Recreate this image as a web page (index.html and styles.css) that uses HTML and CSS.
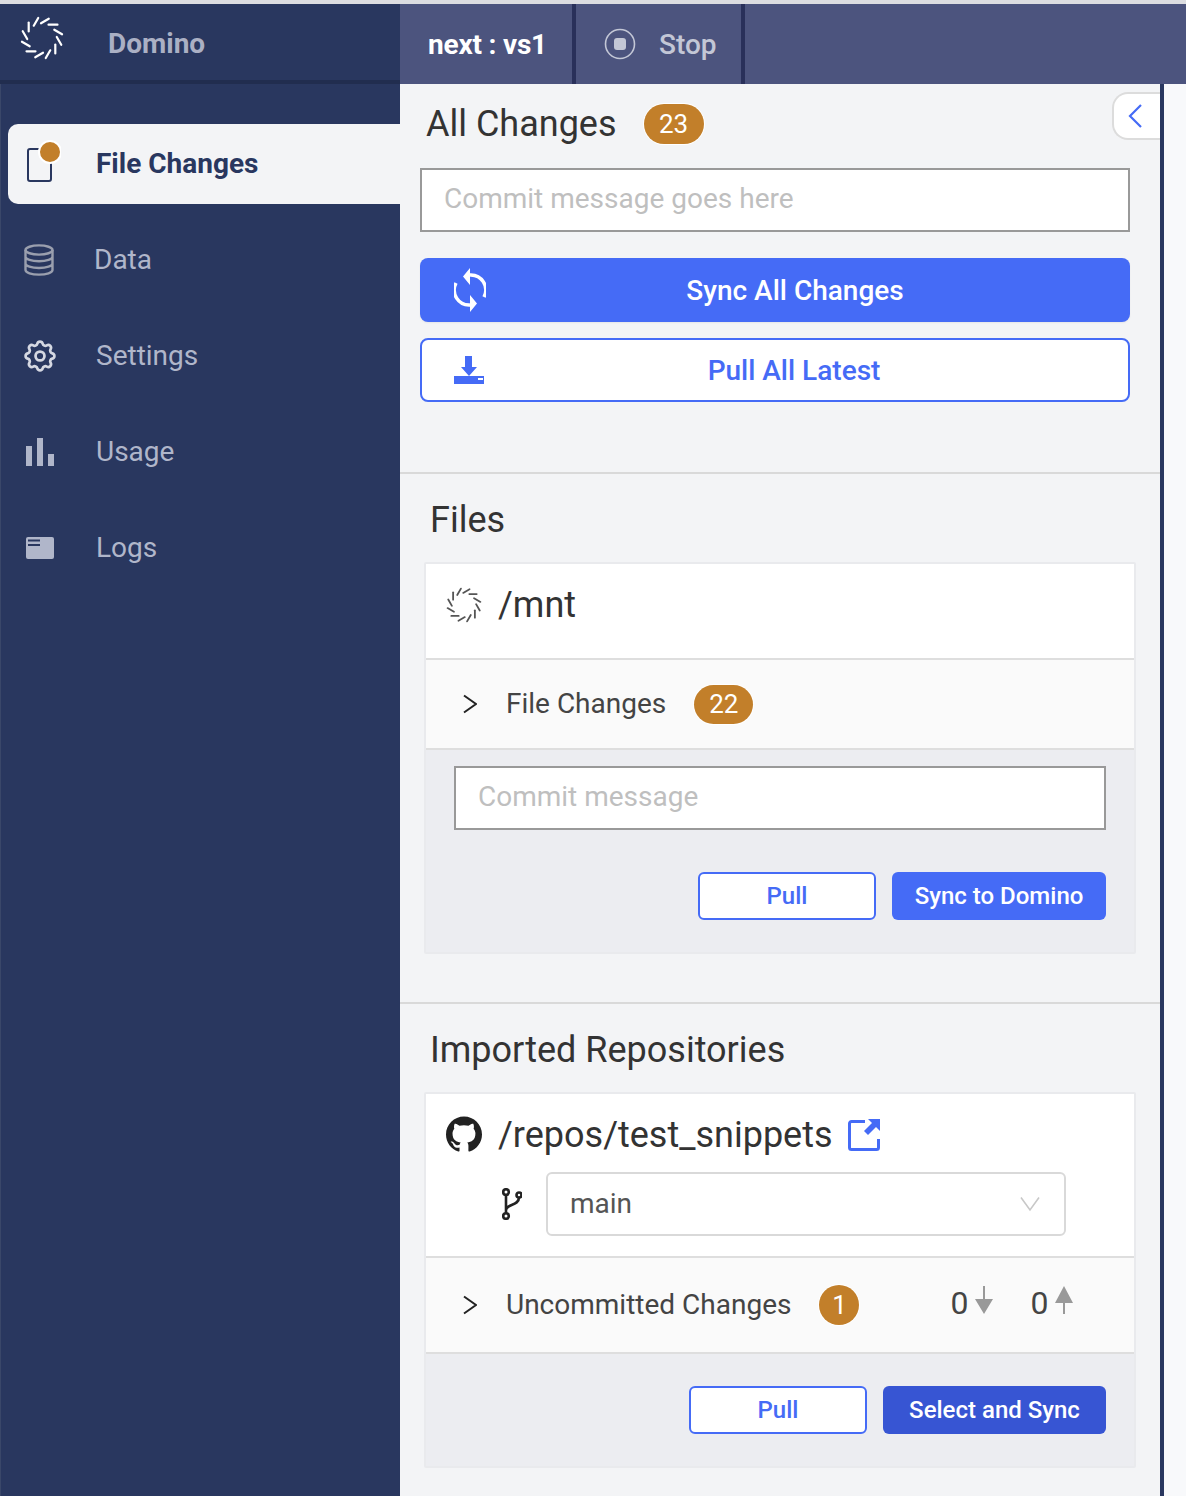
FILE: index.html
```html
<!DOCTYPE html>
<html lang="en">
<head>
<meta charset="utf-8">
<title>Domino</title>
<link rel="stylesheet" href="styles.css">
</head>
<body>
<svg class="defs" width="0" height="0" aria-hidden="true">
  <symbol id="spiral" viewBox="-22 -22 44 44">
    <g fill="none" stroke="currentColor" stroke-width="2.200" stroke-linecap="round">
      <path d="M6.500-13.300H15.500"/><path transform="rotate(30)" d="M6.500-13.300H15.500"/><path transform="rotate(60)" d="M6.500-13.300H15.500"/><path transform="rotate(90)" d="M6.500-13.300H15.500"/><path transform="rotate(120)" d="M6.500-13.300H15.500"/><path transform="rotate(150)" d="M6.500-13.300H15.500"/><path transform="rotate(180)" d="M6.500-13.300H15.500"/><path transform="rotate(210)" d="M6.500-13.300H15.500"/><path transform="rotate(240)" d="M6.500-13.300H15.500"/><path transform="rotate(270)" d="M6.500-13.300H15.500"/><path transform="rotate(300)" d="M6.500-13.300H15.500"/><path transform="rotate(330)" d="M6.500-13.300H15.500"/>
    </g>
  </symbol>
  <symbol id="chev" viewBox="0 0 14 20"><path d="M1 1.500 13 10 1 18.500" fill="none" stroke="#222" stroke-width="2"/></symbol>
</svg>
<div class="app">
  <header class="topbar">
    <div class="brand">
      <svg class="brand-logo"><use href="#spiral"/></svg>
      <span class="brand-name">Domino</span>
    </div>
    <div class="tabs">
      <div class="tab tab-name">next : vs1</div>
      <div class="tab tab-stop">
        <svg class="stop-icon" viewBox="0 0 32 32"><circle cx="16" cy="16" r="14.500" fill="none" stroke="#c3c7d6" stroke-width="1.600"/><rect x="10" y="10" width="12" height="12" rx="3" fill="#c3c7d6"/></svg>
        <span>Stop</span>
      </div>
    </div>
  </header>
  <div class="layout">
    <nav class="sidebar">
      <a class="nav-item active">
        <svg class="nav-icon file-icon" viewBox="0 0 34 44"><rect x="1" y="9" width="23" height="32" rx="2" fill="none" stroke="#29375f" stroke-width="2"/><circle cx="23" cy="12" r="11" fill="#c27f2a" stroke="#fff" stroke-width="2"/></svg>
        <span class="nav-label">File Changes</span>
      </a>
      <a class="nav-item item-data">
        <svg class="nav-icon" viewBox="0 0 32 32"><g fill="none" stroke="#9a9fae" stroke-width="2.400"><ellipse cx="16" cy="6" rx="13.500" ry="4.600"/><path d="M2.500 6v20c0 2.600 6 4.600 13.500 4.600s13.500-2 13.500-4.600V6M2.500 12.700c0 2.600 6 4.600 13.500 4.600s13.500-2 13.500-4.600M2.500 19.400c0 2.600 6 4.600 13.500 4.600s13.500-2 13.500-4.600"/></g></svg>
        <span class="nav-label">Data</span>
      </a>
      <a class="nav-item">
        <svg class="nav-icon" viewBox="2 2 20 20"><g fill="none" stroke="#d5d8e2" stroke-width="1.700"><path d="M10.325 4.317c.426-1.756 2.924-1.756 3.350 0a1.724 1.724 0 002.573 1.066c1.543-.940 3.310.826 2.370 2.370a1.724 1.724 0 001.065 2.572c1.756.426 1.756 2.924 0 3.350a1.724 1.724 0 00-1.066 2.573c.940 1.543-.826 3.310-2.370 2.370a1.724 1.724 0 00-2.572 1.065c-.426 1.756-2.924 1.756-3.350 0a1.724 1.724 0 00-2.573-1.066c-1.543.940-3.310-.826-2.370-2.370a1.724 1.724 0 00-1.065-2.572c-1.756-.426-1.756-2.924 0-3.350a1.724 1.724 0 001.066-2.573c-.940-1.543.826-3.310 2.370-2.370.996.608 2.296.070 2.572-1.065z"/><circle cx="12" cy="12" r="2.800"/></g></svg>
        <span class="nav-label">Settings</span>
      </a>
      <a class="nav-item">
        <svg class="nav-icon" viewBox="0 0 32 32"><g fill="#b0b6ca"><rect x="2" y="10" width="6" height="20"/><rect x="13" y="2" width="6" height="28"/><rect x="24" y="18" width="6" height="12"/></g></svg>
        <span class="nav-label">Usage</span>
      </a>
      <a class="nav-item">
        <svg class="nav-icon" viewBox="0 0 32 32"><rect x="2" y="5" width="28" height="22" rx="2" fill="#b0b6ca"/><path d="M4 8.500h12M4 13h12" stroke="#29375f" stroke-width="2"/></svg>
        <span class="nav-label">Logs</span>
      </a>
    </nav>
    <main class="panel">
      <section class="section section-all">
        <button class="collapse-tab" aria-label="Collapse"><svg viewBox="0 0 16 26" class="collapse-icon"><path d="M14 2 3 13l11 11" fill="none" stroke="#456bf6" stroke-width="2.200"/></svg></button>
        <div class="title-row">
          <h1 class="title">All Changes</h1>
          <span class="badge badge-big">23</span>
        </div>
        <div class="input input-all">Commit message goes here</div>
        <button class="wide-btn primary">
          <svg class="wide-icon" viewBox="0 0 32 44"><g fill="none" stroke="#fff" stroke-width="3.500"><path d="M16 7A15 15 0 0 1 30 29"/><path d="M16 37A15 15 0 0 1 2 15"/></g><path d="M16 0v17L9 8.500zM16 44V27l7 8.500z" fill="#fff"/></svg>
          <span>Sync All Changes</span>
        </button>
        <button class="wide-btn outline">
          <svg class="wide-icon" viewBox="0 0 32 32"><path d="M12 1h7v11h5l-8 9-8-9h4z" fill="#456bf6"/><path fill-rule="evenodd" d="M1 21h30v8H1zM25 23v2h5v-2z" fill="#456bf6"/></svg>
          <span>Pull All Latest</span>
        </button>
      </section>

      <section class="section section-files">
        <h2 class="title sub-title">Files</h2>
        <div class="card">
          <div class="card-head head-mnt">
            <svg class="head-icon spiral-dark"><use href="#spiral"/></svg>
            <span class="head-name">/mnt</span>
          </div>
          <div class="row row-files">
            <svg class="chev"><use href="#chev"/></svg>
            <span class="row-label">File Changes</span>
            <span class="badge badge-small">22</span>
          </div>
          <div class="card-foot">
            <div class="input input-commit">Commit message</div>
            <div class="actions actions-files">
              <button class="btn btn-outline">Pull</button>
              <button class="btn btn-primary btn-sync">Sync to Domino</button>
            </div>
          </div>
        </div>
      </section>

      <section class="section section-repos">
        <h2 class="title sub-title">Imported Repositories</h2>
        <div class="card">
          <div class="card-head head-repo">
            <div class="repo-line">
              <svg class="head-icon" viewBox="0 0 24 24"><path fill="#222" d="M12 .297c-6.630 0-12 5.373-12 12 0 5.303 3.438 9.800 8.205 11.385.600.113.820-.258.820-.577 0-.285-.010-1.040-.015-2.040-3.338.724-4.042-1.610-4.042-1.610C4.422 18.070 3.633 17.700 3.633 17.700c-1.087-.744.084-.729.084-.729 1.205.084 1.838 1.236 1.838 1.236 1.070 1.835 2.809 1.305 3.495.998.108-.776.417-1.305.760-1.605-2.665-.300-5.466-1.332-5.466-5.930 0-1.310.465-2.380 1.235-3.220-.135-.303-.540-1.523.105-3.176 0 0 1.005-.322 3.300 1.230.960-.267 1.980-.399 3-.405 1.020.006 2.040.138 3 .405 2.280-1.552 3.285-1.230 3.285-1.230.645 1.653.240 2.873.120 3.176.765.840 1.230 1.910 1.230 3.220 0 4.610-2.805 5.625-5.475 5.920.420.360.810 1.096.810 2.220 0 1.606-.015 2.896-.015 3.286 0 .315.210.690.825.570C20.565 22.092 24 17.592 24 12.297c0-6.627-5.373-12-12-12"/></svg>
              <span class="head-name repo-name">/repos/test_snippets</span>
              <svg class="ext-icon" viewBox="0 0 32 32"><path d="M17 2.500H3.500a2 2 0 0 0-2 2v24a2 2 0 0 0 2 2h25a2 2 0 0 0 2-2V20" fill="none" stroke="#456bf6" stroke-width="3"/><path d="M20 0h12v12l-4-4-8 8-4-4 8-8z" fill="#456bf6"/></svg>
            </div>
            <div class="branch-line">
              <svg class="branch-icon" viewBox="0 0 20 32"><g fill="none" stroke="#222" stroke-width="2.600"><circle cx="4" cy="4" r="2.800"/><circle cx="4" cy="28" r="2.800"/><circle cx="17" cy="7" r="2.500"/><path d="M4 7v18M4 22c0-6 13-4 13-12.500"/></g></svg>
              <div class="select"><span class="select-text">main</span><svg class="select-caret" viewBox="0 0 20 16"><path d="M1 1.500 10 14l9-12.500" fill="none" stroke="#c8c8c8" stroke-width="1.600"/></svg></div>
            </div>
          </div>
          <div class="row row-repo">
            <svg class="chev"><use href="#chev"/></svg>
            <span class="row-label">Uncommitted Changes</span>
            <span class="badge badge-round">1</span>
            <span class="count count-first">0</span>
            <svg class="count-arrow" viewBox="0 0 18 28"><path d="M8 0h2v13h8l-9 15-9-15h8z" fill="#999"/></svg>
            <span class="count count-second">0</span>
            <svg class="count-arrow" viewBox="0 0 18 28"><path d="M8 28h2V17h8L9 0 0 17h8z" fill="#999"/></svg>
          </div>
          <div class="card-foot foot-repo">
            <div class="actions">
              <button class="btn btn-outline">Pull</button>
              <button class="btn btn-dark">Select and Sync</button>
            </div>
          </div>
        </div>
      </section>
    </main>
    <div class="gutter"></div>
  </div>
</div>
</body>
</html>
```
FILE: styles.css
```css
* { box-sizing: border-box; }
html, body { margin: 0; padding: 0; }
body { width: 1186px; height: 1496px; overflow: hidden; background: #f8f9fb; font-family: Roboto, "Liberation Sans", sans-serif; color: #333; }
.defs { display: block; width: 0; height: 0; }

.app { display: flex; flex-direction: column; height: 1496px; border-top: 4px solid #dcdde1; }
.topbar { display: flex; height: 80px; flex: none; }
.brand { width: 400px; display: flex; align-items: center; background: #29375f; border-bottom: 4px solid #212d4f; padding-left: 20px; }
.brand-logo { width: 44px; height: 44px; margin-bottom: 8px; color: #fff; }
.brand-name { margin: 4px 0 0 44px; font-size: 28px; font-weight: 700; color: #abb0c4; line-height: 1; }
.tabs { flex: 1; display: flex; background: #4c547e; }
.tab { display: flex; align-items: center; height: 80px; border-right: 4px solid #29305a; font-size: 28px; }
.tab-name { width: 176px; padding-left: 28px; font-weight: 700; color: #fff; letter-spacing: -.2px; }
.tab-stop { width: 169px; padding-left: 28px; font-weight: 500; color: #c3c7d6; }
.stop-icon { width: 32px; height: 32px; margin-right: 23px; }

.layout { flex: 1; display: flex; min-height: 0; }
.sidebar { width: 400px; flex: none; background: #29375f; padding: 40px 0 0 8px; display: flex; flex-direction: column; gap: 16px; border-left: 1px solid #3a4769; }
.nav-item { height: 80px; display: flex; align-items: center; padding-left: 15px; font-size: 28px; color: #b0b6ca; border-radius: 10px 0 0 10px; }
.nav-label { margin-top: -2px; }
.nav-item.active { background: #f3f4f6; color: #29375f; font-weight: 700; margin-left: -1px; padding-left: 19px; }
.item-data { padding-left: 14px; }
.item-data .nav-icon { margin-right: 39px; }
.nav-icon { width: 32px; height: 32px; flex: none; margin-right: 40px; }
.file-icon { width: 34px; height: 44px; margin-right: 35px; margin-top: -4px; }

.panel { width: 764px; flex: none; background: #f3f4f6; border-right: 4px solid #29375f; min-height: 0; }
.gutter { flex: 1; background: #f8f9fb; }
.section { position: relative; border-bottom: 2px solid #d9d9d9; }
.section-all { padding: 20px 30px 70px 20px; }
.section-files { padding: 26px 24px 48px 24px; }
.section-repos { padding: 26px 24px 0; border-bottom: 0; }

.collapse-tab { position: absolute; top: 8px; right: 0; width: 48px; height: 48px; padding: 0; background: #fff; border: 2px solid #dcdcdc; border-right: 0; border-radius: 16px 0 0 16px; display: flex; align-items: center; justify-content: center; }
.collapse-icon { width: 16px; height: 26px; margin-left: -4px; }

.title { margin: 0; font-size: 36px; line-height: 40px; font-weight: 400; color: #333; }
.title-row { display: flex; align-items: center; padding-left: 6px; height: 40px; }
.sub-title { padding-left: 6px; margin-bottom: 22px; }
.badge { display: inline-flex; align-items: center; justify-content: center; background: #c27f2a; color: #fff; flex: none; box-shadow: 0 0 0 1px #fff; }
.badge-big { width: 60px; height: 40px; border-radius: 20px; font-size: 26px; margin-left: 27px; }
.badge-small { width: 59px; height: 39px; border-radius: 20px; font-size: 26px; margin-left: 28px; }
.badge-round { width: 40px; height: 40px; border-radius: 50%; font-size: 26px; margin-left: 28px; }

.input { display: flex; align-items: center; height: 64px; background: #fff; border: 2px solid #999; padding: 0 0 4px 22px; font-size: 28px; color: #bfbfbf; }
.input-all { margin: 24px 0 26px; }

.wide-btn { position: relative; display: flex; align-items: center; justify-content: center; width: 100%; height: 64px; padding: 0 0 0 40px; border-radius: 8px; font: 500 28px Roboto, "Liberation Sans", sans-serif; }
.wide-btn.primary { background: #456bf6; border: 0; color: #fff; margin-bottom: 16px; box-shadow: 0 1px 2px rgba(0,0,0,.06); }
.wide-btn.outline { background: #fff; border: 2px solid #456bf6; color: #456bf6; padding-left: 38px; }
.wide-icon { position: absolute; left: 34px; top: 10px; width: 32px; height: 44px; }
.wide-btn.outline .wide-icon { left: 31px; top: 15px; width: 32px; height: 32px; }

.card { background: #fff; border: 2px solid #e9eaed; border-radius: 2px; }
.card-head { border-bottom: 2px solid #dedede; }
.head-mnt { display: flex; align-items: flex-start; height: 96px; padding: 21px 0 0 20px; }
.head-icon { width: 36px; height: 36px; flex: none; margin-top: 2px; }
.spiral-dark { color: #555; }
.head-name { margin-left: 16px; font-size: 36px; line-height: 40px; color: #333; }
.repo-name { margin-top: 1px; }
.head-repo { padding: 20px 0 20px 20px; }
.repo-line { display: flex; align-items: flex-start; height: 58px; }
.ext-icon { width: 32px; height: 32px; margin: 5px 0 0 15px; }
.branch-line { display: flex; align-items: center; }
.branch-icon { width: 20px; height: 32px; margin-left: 56px; }
.select { display: flex; align-items: center; justify-content: space-between; width: 520px; height: 64px; margin-left: 24px; padding: 0 24px 0 22px; border: 2px solid #d9d9d9; border-radius: 6px; font-size: 28px; color: #555; }
.select-text { margin-top: -2px; }
.select-caret { width: 20px; height: 16px; }

.row { display: flex; align-items: center; background: #fafafa; border-bottom: 2px solid #dedede; padding-left: 37px; }
.row-files { height: 90px; }
.row-repo { height: 96px; }
.chev { width: 14px; height: 20px; flex: none; }
.row-label { margin: -2px 0 0 29px; font-size: 28px; color: #444; }
.count { font-size: 32px; color: #444; line-height: 1; margin-top: -4px; }
.count-first { margin-left: 91px; }
.count-second { margin-left: 37px; }
.count-arrow { width: 18px; height: 28px; margin: -10px 0 0 7px; }

.card-foot { background: #ecedf1; padding: 16px 28px 32px; }
.foot-repo { padding-top: 32px; }
.actions { display: flex; justify-content: flex-end; gap: 16px; }
.actions-files { margin-top: 42px; }
.btn { height: 48px; width: 178px; padding: 0; border-radius: 6px; font: 500 24px Roboto, "Liberation Sans", sans-serif; }
.btn-outline { background: #fff; border: 2px solid #456bf6; color: #456bf6; }
.btn-primary { background: #456bf6; border: 0; color: #fff; }
.btn-sync { width: 214px; }
.btn-dark { background: #3755d3; border: 0; color: #fff; width: 223px; }
```
